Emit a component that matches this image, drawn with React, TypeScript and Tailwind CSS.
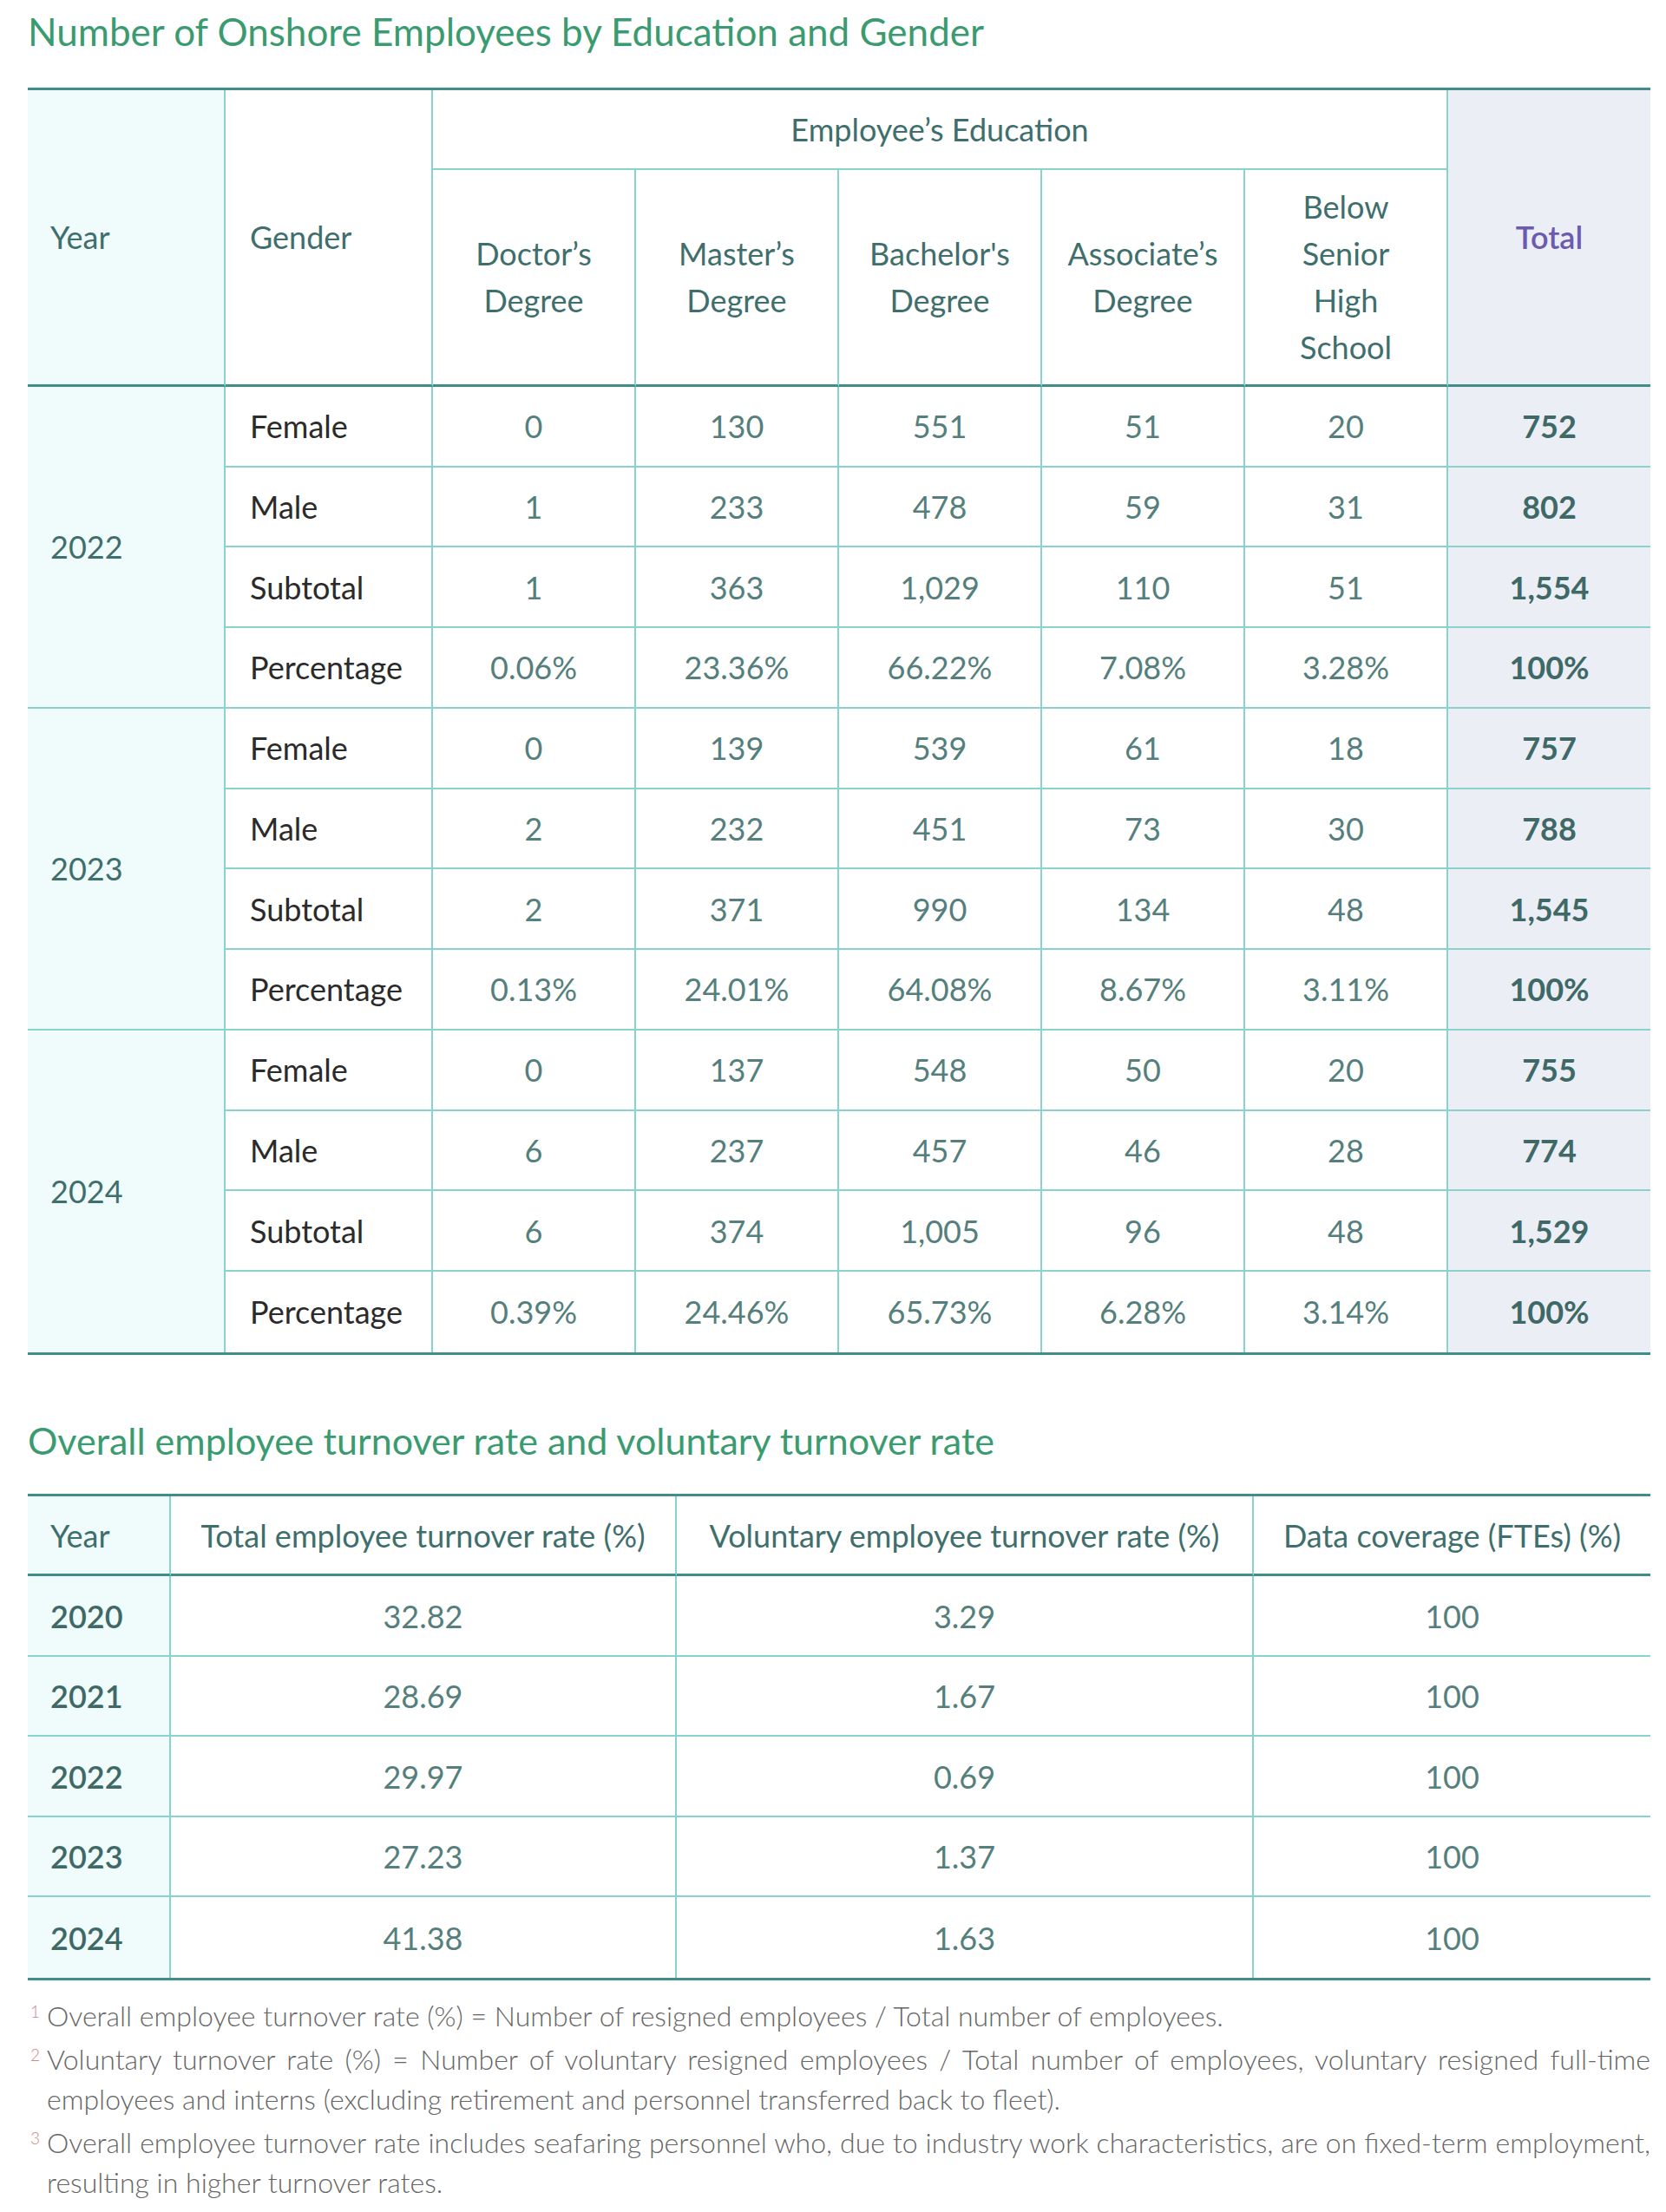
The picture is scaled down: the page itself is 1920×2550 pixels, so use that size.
import React from 'react';

const thin = 'border-[#88d3ce]';
const thick = 'border-[#3f8e8a]';

type Row = { label: string; vals: string[]; total: string };

const EDUCATION: { year: string; rows: Row[] }[] = [
  {
    year: '2022',
    rows: [
      { label: 'Female', vals: ['0', '130', '551', '51', '20'], total: '752' },
      { label: 'Male', vals: ['1', '233', '478', '59', '31'], total: '802' },
      { label: 'Subtotal', vals: ['1', '363', '1,029', '110', '51'], total: '1,554' },
      { label: 'Percentage', vals: ['0.06%', '23.36%', '66.22%', '7.08%', '3.28%'], total: '100%' },
    ],
  },
  {
    year: '2023',
    rows: [
      { label: 'Female', vals: ['0', '139', '539', '61', '18'], total: '757' },
      { label: 'Male', vals: ['2', '232', '451', '73', '30'], total: '788' },
      { label: 'Subtotal', vals: ['2', '371', '990', '134', '48'], total: '1,545' },
      { label: 'Percentage', vals: ['0.13%', '24.01%', '64.08%', '8.67%', '3.11%'], total: '100%' },
    ],
  },
  {
    year: '2024',
    rows: [
      { label: 'Female', vals: ['0', '137', '548', '50', '20'], total: '755' },
      { label: 'Male', vals: ['6', '237', '457', '46', '28'], total: '774' },
      { label: 'Subtotal', vals: ['6', '374', '1,005', '96', '48'], total: '1,529' },
      { label: 'Percentage', vals: ['0.39%', '24.46%', '65.73%', '6.28%', '3.14%'], total: '100%' },
    ],
  },
];

const TURNOVER = [
  ['2020', '32.82', '3.29', '100'],
  ['2021', '28.69', '1.67', '100'],
  ['2022', '29.97', '0.69', '100'],
  ['2023', '27.23', '1.37', '100'],
  ['2024', '41.38', '1.63', '100'],
];

const EDU_HEADERS: React.ReactNode[] = [
  <>Doctor’s<br />Degree</>,
  <>Master’s<br />Degree</>,
  <>Bachelor's<br />Degree</>,
  <>Associate’s<br />Degree</>,
  <>Below<br />Senior<br />High<br />School</>,
];

const EducationTable: React.FC = () => (
  <div
    className={`mt-[38px] w-[1870px] grid grid-cols-[228px_239px_234px_234px_234px_234px_234px_233px] grid-rows-[92px_250px_repeat(12,92.75px)] border-t-[3px] border-b-[3px] ${thick} text-[36px]`}
  >
    {/* header */}
    <div className={`row-span-2 flex items-center pl-[26px] bg-[#f0fbfb] border-r-2 ${thin} border-b-[3px] !border-b-[#3f8e8a] text-[#3f6f6d]`}>Year</div>
    <div className={`row-span-2 flex items-center pl-[28px] border-r-2 ${thin} border-b-[3px] !border-b-[#3f8e8a] text-[#3f6f6d]`}>Gender</div>
    <div className={`col-span-5 flex items-center justify-center border-r-2 border-b-2 ${thin} text-[#3f6f6d]`}>Employee’s Education</div>
    <div className={`row-span-2 flex items-center justify-center bg-[#eceef6] border-b-[3px] ${thick} font-semibold text-[#6a5bb0]`}>Total</div>
    {EDU_HEADERS.map((h, i) => (
      <div
        key={i}
        className={`flex items-center justify-center text-center leading-[54px] border-r-2 ${thin} border-b-[3px] !border-b-[#3f8e8a] text-[#3f6f6d]`}
      >
        <span>{h}</span>
      </div>
    ))}

    {/* body */}
    {EDUCATION.map((g, gi) => {
      const lastGroup = gi === EDUCATION.length - 1;
      return (
        <React.Fragment key={g.year}>
          <div className={`row-span-4 flex items-center pl-[26px] bg-[#f0fbfb] border-r-2 ${lastGroup ? '' : 'border-b-2'} ${thin} text-[#3f6f6d]`}>
            {g.year}
          </div>
          {g.rows.map((r, ri) => {
            const bottom = lastGroup && ri === g.rows.length - 1 ? '' : 'border-b-2';
            return (
              <React.Fragment key={r.label}>
                <div className={`flex items-center pl-[28px] border-r-2 ${bottom} ${thin} text-[#2b2b2b]`}>{r.label}</div>
                {r.vals.map((v, vi) => (
                  <div key={vi} className={`flex items-center justify-center border-r-2 ${bottom} ${thin} text-[#557f7d]`}>
                    {v}
                  </div>
                ))}
                <div className={`flex items-center justify-center bg-[#eceef6] ${bottom} ${thin} font-bold text-[#3e6967]`}>
                  {r.total}
                </div>
              </React.Fragment>
            );
          })}
        </React.Fragment>
      );
    })}
  </div>
);

const TurnoverTable: React.FC = () => (
  <div
    className={`mt-[36px] w-[1870px] grid grid-cols-[165px_583px_665px_457px] grid-rows-[92px_repeat(5,92.5px)] border-t-[3px] border-b-[3px] ${thick} text-[36px]`}
  >
    <div className={`flex items-center pl-[26px] bg-[#f0fbfb] border-r-2 ${thin} border-b-[3px] !border-b-[#3f8e8a] text-[#3f6f6d]`}>Year</div>
    {['Total employee turnover rate (%)', 'Voluntary employee turnover rate (%)', 'Data coverage (FTEs) (%)'].map((h, i) => (
      <div
        key={h}
        className={`flex items-center justify-center whitespace-nowrap ${i < 2 ? 'border-r-2' : ''} ${thin} border-b-[3px] !border-b-[#3f8e8a] text-[#3f6f6d]`}
      >
        {h}
      </div>
    ))}
    {TURNOVER.map((row, ri) => {
      const bottom = ri === TURNOVER.length - 1 ? '' : 'border-b-2';
      return (
        <React.Fragment key={row[0]}>
          <div className={`flex items-center pl-[26px] bg-[#f0fbfb] border-r-2 ${bottom} ${thin} font-semibold text-[#3e6967]`}>
            {row[0]}
          </div>
          {row.slice(1).map((v, vi) => (
            <div key={vi} className={`flex items-center justify-center ${vi < 2 ? 'border-r-2' : ''} ${bottom} ${thin} text-[#557f7d]`}>
              {v}
            </div>
          ))}
        </React.Fragment>
      );
    })}
  </div>
);

const Note: React.FC<{ n: string; lines: string[]; first?: boolean }> = ({ n, lines, first }) => (
  <div className={`flex ${first ? '' : 'mt-[4px]'}`}>
    <span className="w-[22px] shrink-0 pl-[3px] mt-[8px] text-[19px] leading-none text-[#d0878e]">{n}</span>
    <div className="flex-1">
      {lines.map((l, i) => (
        <p key={i} className={i < lines.length - 1 ? 'text-justify [text-align-last:justify]' : ''}>
          {l}
        </p>
      ))}
    </div>
  </div>
);

export default function App() {
  return (
    <div className="min-h-screen bg-white font-['Lato',sans-serif] pl-[32px] pr-[18px] pt-[10px] pb-[20px]">
      <h2 className="text-[44px] leading-[1.2] text-[#3b9b70]">Number of Onshore Employees by Education and Gender</h2>
      <EducationTable />

      <h2 className="mt-[73px] text-[43px] leading-[1.2] text-[#3b9b70]">
        Overall employee turnover rate and voluntary turnover rate
      </h2>
      <TurnoverTable />

      <div className="mt-[18px] w-[1870px] text-[32px] leading-[46px] font-light text-[#666666]">
        <Note
          first
          n="1"
          lines={['Overall employee turnover rate (%) = Number of resigned employees / Total number of employees.']}
        />
        <Note
          n="2"
          lines={[
            'Voluntary turnover rate (%) = Number of voluntary resigned employees / Total number of employees, voluntary resigned full-time',
            'employees and interns (excluding retirement and personnel transferred back to fleet).',
          ]}
        />
        <Note
          n="3"
          lines={[
            'Overall employee turnover rate includes seafaring personnel who, due to industry work characteristics, are on fixed-term employment,',
            'resulting in higher turnover rates.',
          ]}
        />
      </div>
    </div>
  );
}
